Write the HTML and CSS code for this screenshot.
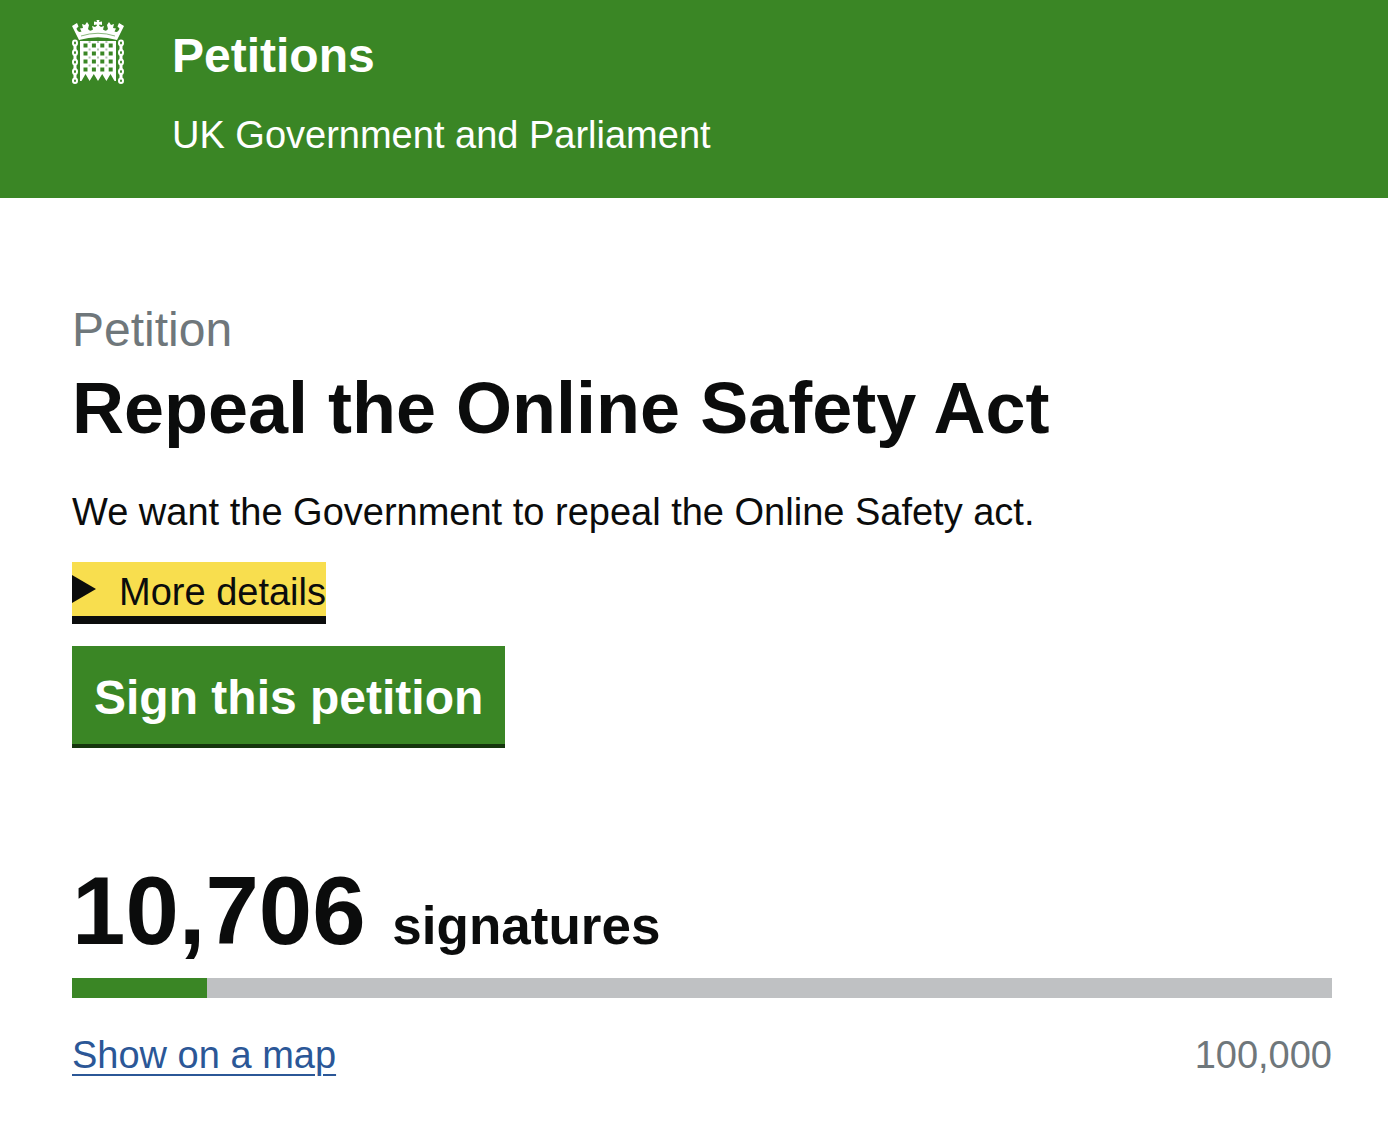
FILE: index.html
```html
<!DOCTYPE html>
<html lang="en">
<head>
<meta charset="utf-8">
<meta name="viewport" content="width=device-width, initial-scale=1">
<title>Repeal the Online Safety Act - Petitions</title>
<link rel="stylesheet" href="styles.css">
</head>
<body>
<header class="header">
  <svg class="logo" viewBox="0 0 52 64" aria-hidden="true">
    <!-- crown -->
    <g fill="#fff">
      <path d="M7 20L0 6 5 3 6.500 6.500 4.500 8.500Q6 13 9.500 11.500L8 8.500 11 8 10 4 13 5 15 2 17 5 16 9Q18 12 21 9.500L20 6 23 7 25 5.500 24.500 4.500 22 5V1.500L25 2 24.500 0H27.500L27 2 30 1.500V5L27.500 4.500 27 5.500 29 7 32 6 31 9.500Q34 12 36 9L35 5 37 2 39 5 42 4 41 8 44 8.500 42.500 11.500Q46 13 47.500 8.500L45.500 6.500 47 3 52 6 45 20Q26 14.500 7 20Z"/>
    </g>
    <path d="M9 16Q26 10.500 43 16" fill="none" stroke="#3a8625" stroke-width=".6"/>
    <!-- portcullis -->
    <path d="M8 21H44V61L42.500 61 38.500 54 34.400 61 30.200 54 26 61 21.800 54 17.600 61 13.500 54 9.500 61H8Z" fill="#fff"/>
    <path d="M11.500 25.500H42M11.500 33.500H42M11.500 41.500H42M11.500 49.500H42" stroke="#3a8625" stroke-width="4" stroke-dasharray="4 4.400"/>
    <path d="M16.600 22H36M16.600 29.500H36M16.600 37.500H36M16.600 45.500H36" stroke="#b5c2b5" stroke-width="2" stroke-dasharray="2 6.400"/>
    <!-- chains -->
    <g fill="none" stroke="#fff" stroke-width="2">
      <g id="chain"><ellipse cx="3" cy="23" rx="2" ry="2.400"/><ellipse cx="3" cy="32.500" rx="2" ry="2.600"/><ellipse cx="3" cy="42" rx="2" ry="2.600"/><ellipse cx="3" cy="51.500" rx="2" ry="2.600"/><ellipse cx="3" cy="60.800" rx="2" ry="2.200"/><path stroke-width="3" d="M3 25V30.500M3 35V40M3 44.500V49.500M3 54V59"/></g>
      <use href="#chain" x="46"/>
    </g>
  </svg>
  <div>
    <a class="site-name" href="/">Petitions</a>
    <p class="tagline">UK Government and Parliament</p>
  </div>
</header>
<main class="main">
  <h1 class="title"><span class="caption">Petition</span> Repeal the Online Safety Act</h1>
  <p class="intro">We want the Government to repeal the Online Safety act.</p>
  <details class="details">
    <summary class="summary"><span class="summary-text">More details</span></summary>
  </details>
  <button class="sign" type="button">Sign this petition</button>
  <section class="count">
    <p class="signatures"><span class="number">10,706</span> signatures</p>
    <div class="track"><div class="bar" style="width: 10.706%"></div></div>
    <div class="foot">
      <a class="map" href="/map">Show on a map</a>
      <span class="goal">100,000</span>
    </div>
  </section>
</main>
</body>
</html>
```
FILE: styles.css
```css
* { box-sizing: border-box; }
body {
  margin: 0;
  background: #fff;
  color: #0b0c0c;
  font: 38px/50px "Liberation Sans", Arial, sans-serif;
}
p, h1 { margin: 0; }
.header {
  display: flex;
  align-items: flex-start;
  gap: 48px;
  padding: 20px 56px 38px 72px;
  background: #3a8625;
  color: #fff;
}
.logo { width: 52px; height: 64px; flex: none; }
.site-name {
  display: block;
  color: #fff;
  font-size: 48px;
  line-height: 72px;
  font-weight: 700;
  text-decoration: none;
}
.tagline { margin-top: 18px; }
.main { padding: 104px 56px 40px 72px; }
.title {
  font-size: 72px;
  line-height: 80px;
  margin-bottom: 39px;
}
.caption {
  display: block;
  color: #6f777b;
  font-size: 48px;
  line-height: 56px;
  font-weight: 400;
  margin-bottom: 10px;
}
.intro { margin-bottom: 25px; }
.summary {
  display: flex;
  align-items: center;
  width: fit-content;
  height: 62px;
  gap: 23px;
  background: #f8de4e;
  border-bottom: 8px solid #0b0c0c;
  cursor: pointer;
  list-style: none;
}
.summary::before {
  content: "";
  border-left: 24px solid #0b0c0c;
  border-top: 14px solid transparent;
  border-bottom: 14px solid transparent;
}
.summary-text { padding-top: 6px; }
.sign {
  display: block;
  margin-top: 22px;
  padding: 24px 22px 18px;
  border: 0;
  border-bottom: 4px solid #15350d;
  background: #3a8625;
  color: #fff;
  font: 700 48px/56px "Liberation Sans", Arial, sans-serif;
  cursor: pointer;
}
.count { margin-top: 111px; }
.signatures {
  font-size: 53px;
  line-height: 104px;
  font-weight: 700;
}
.number { font-size: 96px; margin-right: 12px; }
.track { height: 20px; background: #bfc1c3; }
.bar { height: 100%; background: #3a8625; }
.foot { display: flex; justify-content: space-between; margin-top: 32px; }
.map {
  color: #2b5797;
  text-decoration-thickness: 2px;
  text-underline-offset: 6px;
}
.goal { color: #6f777b; }
```
